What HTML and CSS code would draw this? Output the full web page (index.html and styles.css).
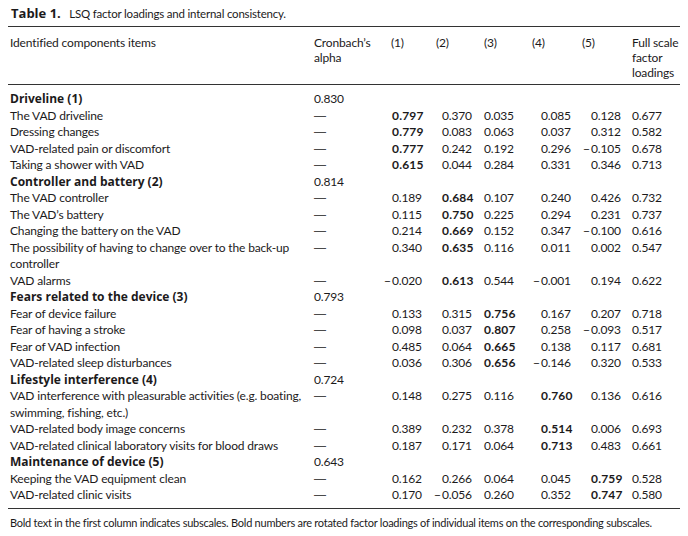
FILE: index.html
```html
<!DOCTYPE html>
<html>
<head>
<meta charset="utf-8">
<link rel="stylesheet" href="styles.css">
</head>
<body>
<div class="page">
  <div class="caption"><b>Table 1.</b>&nbsp; LSQ factor loadings and internal consistency.</div>
  <table class="tbl">
    <colgroup>
      <col class="c-item"><col class="c-alpha"><col class="c-f1"><col class="c-f2"><col class="c-f3"><col class="c-f4"><col class="c-f5"><col class="c-full">
    </colgroup>
    <thead>
      <tr>
        <th class="item">Identified components items</th>
        <th>Cronbach’s alpha</th>
        <th>(1)</th><th>(2)</th><th>(3)</th><th>(4)</th><th>(5)</th>
        <th>Full scale factor loadings</th>
      </tr>
    </thead>
    <tbody>
      <tr class="first"><td class="item sub">Driveline (1)</td><td class="a">0.830</td><td></td><td></td><td></td><td></td><td></td><td></td></tr>
      <tr><td class="item">The VAD driveline</td><td class="a d">—</td><td class="n n1 b">0.797</td><td class="n n2">0.370</td><td class="n n3">0.035</td><td class="n n4">0.085</td><td class="n n5">0.128</td><td class="n n6">0.677</td></tr>
      <tr><td class="item">Dressing changes</td><td class="a d">—</td><td class="n n1 b">0.779</td><td class="n n2">0.083</td><td class="n n3">0.063</td><td class="n n4">0.037</td><td class="n n5">0.312</td><td class="n n6">0.582</td></tr>
      <tr><td class="item">VAD-related pain or discomfort</td><td class="a d">—</td><td class="n n1 b">0.777</td><td class="n n2">0.242</td><td class="n n3">0.192</td><td class="n n4">0.296</td><td class="n n5"><span class="m">−</span>0.105</td><td class="n n6">0.678</td></tr>
      <tr><td class="item">Taking a shower with VAD</td><td class="a d">—</td><td class="n n1 b">0.615</td><td class="n n2">0.044</td><td class="n n3">0.284</td><td class="n n4">0.331</td><td class="n n5">0.346</td><td class="n n6">0.713</td></tr>
      <tr><td class="item sub">Controller and battery (2)</td><td class="a">0.814</td><td></td><td></td><td></td><td></td><td></td><td></td></tr>
      <tr><td class="item">The VAD controller</td><td class="a d">—</td><td class="n n1">0.189</td><td class="n n2 b">0.684</td><td class="n n3">0.107</td><td class="n n4">0.240</td><td class="n n5">0.426</td><td class="n n6">0.732</td></tr>
      <tr><td class="item">The VAD’s battery</td><td class="a d">—</td><td class="n n1">0.115</td><td class="n n2 b">0.750</td><td class="n n3">0.225</td><td class="n n4">0.294</td><td class="n n5">0.231</td><td class="n n6">0.737</td></tr>
      <tr><td class="item">Changing the battery on the VAD</td><td class="a d">—</td><td class="n n1">0.214</td><td class="n n2 b">0.669</td><td class="n n3">0.152</td><td class="n n4">0.347</td><td class="n n5"><span class="m">−</span>0.100</td><td class="n n6">0.616</td></tr>
      <tr><td class="item">The possibility of having to change over to the back-up controller</td><td class="a d">—</td><td class="n n1">0.340</td><td class="n n2 b">0.635</td><td class="n n3">0.116</td><td class="n n4">0.011</td><td class="n n5">0.002</td><td class="n n6">0.547</td></tr>
      <tr><td class="item">VAD alarms</td><td class="a d">—</td><td class="n n1"><span class="m">−</span>0.020</td><td class="n n2 b">0.613</td><td class="n n3">0.544</td><td class="n n4"><span class="m">−</span>0.001</td><td class="n n5">0.194</td><td class="n n6">0.622</td></tr>
      <tr><td class="item sub">Fears related to the device (3)</td><td class="a">0.793</td><td></td><td></td><td></td><td></td><td></td><td></td></tr>
      <tr><td class="item">Fear of device failure</td><td class="a d">—</td><td class="n n1">0.133</td><td class="n n2">0.315</td><td class="n n3 b">0.756</td><td class="n n4">0.167</td><td class="n n5">0.207</td><td class="n n6">0.718</td></tr>
      <tr><td class="item">Fear of having a stroke</td><td class="a d">—</td><td class="n n1">0.098</td><td class="n n2">0.037</td><td class="n n3 b">0.807</td><td class="n n4">0.258</td><td class="n n5"><span class="m">−</span>0.093</td><td class="n n6">0.517</td></tr>
      <tr><td class="item">Fear of VAD infection</td><td class="a d">—</td><td class="n n1">0.485</td><td class="n n2">0.064</td><td class="n n3 b">0.665</td><td class="n n4">0.138</td><td class="n n5">0.117</td><td class="n n6">0.681</td></tr>
      <tr><td class="item">VAD-related sleep disturbances</td><td class="a d">—</td><td class="n n1">0.036</td><td class="n n2">0.306</td><td class="n n3 b">0.656</td><td class="n n4"><span class="m">−</span>0.146</td><td class="n n5">0.320</td><td class="n n6">0.533</td></tr>
      <tr><td class="item sub">Lifestyle interference (4)</td><td class="a">0.724</td><td></td><td></td><td></td><td></td><td></td><td></td></tr>
      <tr><td class="item">VAD interference with pleasurable activities (e.g. boating, swimming, fishing, etc.)</td><td class="a d">—</td><td class="n n1">0.148</td><td class="n n2">0.275</td><td class="n n3">0.116</td><td class="n n4 b">0.760</td><td class="n n5">0.136</td><td class="n n6">0.616</td></tr>
      <tr><td class="item">VAD-related body image concerns</td><td class="a d">—</td><td class="n n1">0.389</td><td class="n n2">0.232</td><td class="n n3">0.378</td><td class="n n4 b">0.514</td><td class="n n5">0.006</td><td class="n n6">0.693</td></tr>
      <tr><td class="item">VAD-related clinical laboratory visits for blood draws</td><td class="a d">—</td><td class="n n1">0.187</td><td class="n n2">0.171</td><td class="n n3">0.064</td><td class="n n4 b">0.713</td><td class="n n5">0.483</td><td class="n n6">0.661</td></tr>
      <tr><td class="item sub">Maintenance of device (5)</td><td class="a">0.643</td><td></td><td></td><td></td><td></td><td></td><td></td></tr>
      <tr><td class="item">Keeping the VAD equipment clean</td><td class="a d">—</td><td class="n n1">0.162</td><td class="n n2">0.266</td><td class="n n3">0.064</td><td class="n n4">0.045</td><td class="n n5 b">0.759</td><td class="n n6">0.528</td></tr>
      <tr class="last"><td class="item">VAD-related clinic visits</td><td class="a d">—</td><td class="n n1">0.170</td><td class="n n2"><span class="m">−</span>0.056</td><td class="n n3">0.260</td><td class="n n4">0.352</td><td class="n n5 b">0.747</td><td class="n n6">0.580</td></tr>
    </tbody>
  </table>
  <div class="note">Bold text in the first column indicates subscales. Bold numbers are rotated factor loadings of individual items on the corresponding subscales.</div>
</div>
</body>
</html>
```

FILE: styles.css
```css
html, body {
  margin: 0;
  padding: 0;
  background: #ffffff;
}
body {
  font-family: "Lato", "Liberation Sans", sans-serif;
  color: #1c1a1b;
}
.page {
  padding: 6px 8px 0 8px;
}
.caption {
  font-size: 11.5px;
  line-height: 15px;
  letter-spacing: -0.2px;
  padding-left: 3px;
  padding-bottom: 5px;
}
.caption b {
  font-family: "Open Sans", "Lato", sans-serif;
  font-size: 13px;
  font-weight: 700;
  letter-spacing: 0;
  margin-right: 3px;
}
.tbl {
  width: 672px;
  table-layout: fixed;
  border-collapse: collapse;
  font-size: 12px;
  letter-spacing: -0.15px;
  line-height: 16.5px;
  border-top: 1px solid #333333;
  border-bottom: 1px solid #333333;
}
.c-item { width: 306px; }
.c-alpha { width: 77px; }
.c-f1 { width: 45px; }
.c-f2 { width: 48px; }
.c-f3 { width: 48px; }
.c-f4 { width: 50px; }
.c-f5 { width: 50px; }
.c-full { width: 48px; }
th, td {
  padding: 0;
  text-align: left;
  vertical-align: baseline;
  white-space: nowrap;
}
thead th {
  font-weight: 400;
  line-height: 15px;
  vertical-align: top;
  padding-top: 8px;
  padding-bottom: 4px;
  white-space: normal;
  border-bottom: 1px solid #333333;
}
th.item, td.item {
  padding-left: 2px;
  white-space: normal;
}
td.item {
  padding-right: 8px;
}
td.sub {
  font-family: "Open Sans", "Lato", sans-serif;
  font-weight: 700;
  letter-spacing: 0;
}
.b {
  font-weight: 700;
  letter-spacing: 0.2px;
}
td.d {
  font-family: "Liberation Sans", sans-serif;
  font-size: 12px;
  letter-spacing: 0;
  color: #4a4a4a;
}
tbody tr.first td {
  padding-top: 6px;
}
tbody tr.last td {
  padding-bottom: 4px;
}
.m {
  display: inline-block;
  width: 8px;
  margin-left: -8px;
  text-align: left;
}
.n1 { padding-left: 1px; }
.n2 { padding-left: 6px; }
.n3 { padding-left: 0; }
.n4 { padding-left: 9px; }
.n5 { padding-left: 9px; }
.n6 { padding-left: 0; }
.note {
  font-size: 11px;
  line-height: 14px;
  letter-spacing: -0.25px;
  white-space: nowrap;
  padding: 7px 0 0 2px;
}
```
